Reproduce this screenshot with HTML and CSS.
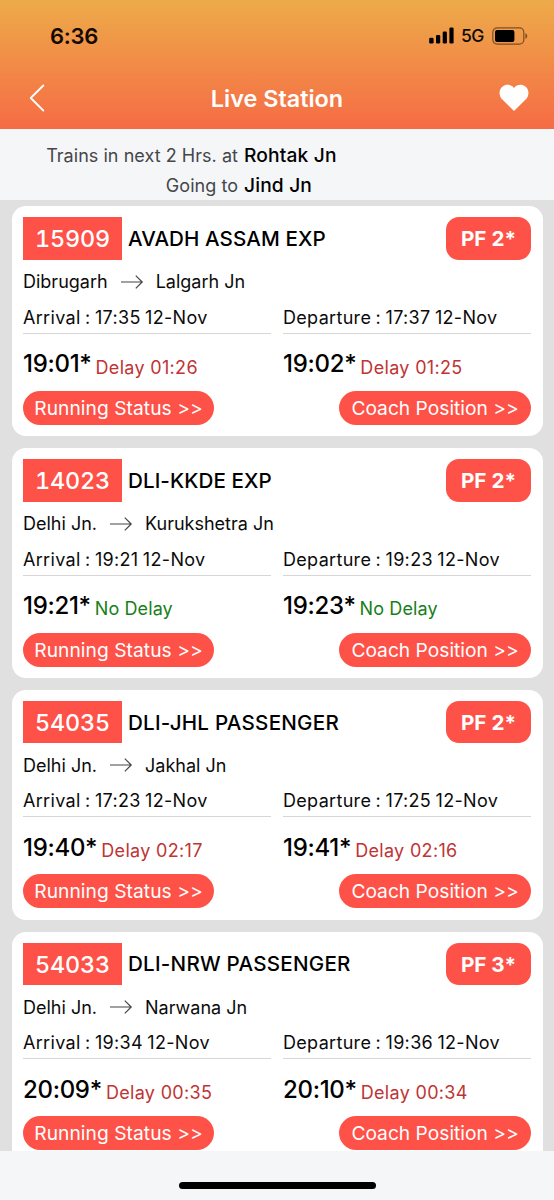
FILE: index.html
```html
<!DOCTYPE html>
<html lang="en">
<head>
<meta charset="utf-8">
<title>Live Station</title>
<link rel="stylesheet" href="styles.css">
</head>
<body>
<svg class="defs" aria-hidden="true"><symbol id="arrow" viewBox="0 0 24 16"><path d="M1 8H22.2M15.8 1.6L22.2 8L15.8 14.4"/></symbol></svg>
<div class="screen">
  <header class="top">
    <div class="status">
      <span class="clock">6:36</span>
      <div class="signals">
        <svg class="bars" viewBox="0 0 25 17"><rect x="0.2" y="10.8" width="4.4" height="5.7" rx="1.3"/><rect x="7" y="8" width="4.2" height="8.5" rx="1.3"/><rect x="13.7" y="4.4" width="4.2" height="12.1" rx="1.3"/><rect x="20.4" y="0.4" width="4.2" height="16.1" rx="1.3"/></svg>
        <span class="net">5G</span>
        <svg class="battery" viewBox="0 0 36 18"><rect class="shell" x="0.8" y="0.8" width="31" height="16.4" rx="4.4"/><rect x="3" y="3" width="19.4" height="12" rx="2"/><path class="tip" d="M33.4 6.2C35.8 6.9 35.8 11.1 33.4 11.8Z"/></svg>
      </div>
    </div>
    <nav class="nav">
      <svg class="back" viewBox="0 0 16 28"><path d="M14.3 1.5L1.7 14L14.3 26.5"/></svg>
      <h1 class="title">Live Station</h1>
      <svg class="heart" viewBox="0 0 30 28"><path d="M15 27L3.4 15.6C-.6 11.6-.2 5.4 3.6 2.5C7.2-.2 12.2.4 15 4C17.8.4 22.8-.2 26.4 2.5C30.2 5.4 30.6 11.6 26.6 15.6Z"/></svg>
    </nav>
  </header>
  <section class="summary">
    <div class="label">Trains in next 2 Hrs. at</div><div class="value">Rohtak Jn</div>
    <div class="label">Going to</div><div class="value">Jind Jn</div>
  </section>
  <main class="list">
    <article class="card">
      <div class="head"><span class="number">15909</span><span class="name">AVADH ASSAM EXP</span><span class="platform">PF 2*</span></div>
      <div class="route"><span>Dibrugarh</span><svg class="arrow"><use href="#arrow"/></svg><span>Lalgarh Jn</span></div>
      <div class="cols"><div class="sched">Arrival : 17:35 12-Nov</div><div class="sched">Departure : 17:37 12-Nov</div></div>
      <div class="cols actual"><div class="live"><b>19:01*</b><span class="late">Delay 01:26</span></div><div class="live"><b>19:02*</b><span class="late">Delay 01:25</span></div></div>
      <div class="actions"><span class="pill run">Running Status &gt;&gt;</span><span class="pill coach">Coach Position &gt;&gt;</span></div>
    </article>
    <article class="card">
      <div class="head"><span class="number">14023</span><span class="name">DLI-KKDE EXP</span><span class="platform">PF 2*</span></div>
      <div class="route"><span>Delhi Jn.</span><svg class="arrow"><use href="#arrow"/></svg><span>Kurukshetra Jn</span></div>
      <div class="cols"><div class="sched">Arrival : 19:21 12-Nov</div><div class="sched">Departure : 19:23 12-Nov</div></div>
      <div class="cols actual"><div class="live"><b>19:21*</b><span class="ontime">No Delay</span></div><div class="live"><b>19:23*</b><span class="ontime">No Delay</span></div></div>
      <div class="actions"><span class="pill run">Running Status &gt;&gt;</span><span class="pill coach">Coach Position &gt;&gt;</span></div>
    </article>
    <article class="card">
      <div class="head"><span class="number">54035</span><span class="name wide">DLI-JHL PASSENGER</span><span class="platform">PF 2*</span></div>
      <div class="route"><span>Delhi Jn.</span><svg class="arrow"><use href="#arrow"/></svg><span>Jakhal Jn</span></div>
      <div class="cols"><div class="sched">Arrival : 17:23 12-Nov</div><div class="sched">Departure : 17:25 12-Nov</div></div>
      <div class="cols actual"><div class="live"><b>19:40*</b><span class="late">Delay 02:17</span></div><div class="live"><b>19:41*</b><span class="late">Delay 02:16</span></div></div>
      <div class="actions"><span class="pill run">Running Status &gt;&gt;</span><span class="pill coach">Coach Position &gt;&gt;</span></div>
    </article>
    <article class="card">
      <div class="head"><span class="number">54033</span><span class="name wide">DLI-NRW PASSENGER</span><span class="platform">PF 3*</span></div>
      <div class="route"><span>Delhi Jn.</span><svg class="arrow"><use href="#arrow"/></svg><span>Narwana Jn</span></div>
      <div class="cols"><div class="sched">Arrival : 19:34 12-Nov</div><div class="sched">Departure : 19:36 12-Nov</div></div>
      <div class="cols actual"><div class="live"><b>20:09*</b><span class="late">Delay 00:35</span></div><div class="live"><b>20:10*</b><span class="late">Delay 00:34</span></div></div>
      <div class="actions"><span class="pill run">Running Status &gt;&gt;</span><span class="pill coach">Coach Position &gt;&gt;</span></div>
    </article>
  </main>
  <footer class="bottom"><div class="home"></div></footer>
</div>
</body>
</html>
```
FILE: styles.css
```css
* { box-sizing: border-box; }
body { margin: 0; font-family: Inter, "Liberation Sans", sans-serif; color: #0b0b0b; white-space: nowrap; }
svg { display: block; flex: none; }
.defs { width: 0; height: 0; position: absolute; }
.screen { width: 554px; height: 1200px; display: flex; flex-direction: column; overflow: hidden; background: #f5f6f8; }

.top { height: 129.4px; flex: none; background: linear-gradient(#edab49, #f66b45); }
.status { height: 67px; padding: 4px 26px 0 50px; display: flex; align-items: center; justify-content: space-between; }
.clock { font-size: 22px; font-weight: 600; letter-spacing: -.3px; color: #140a04; }
.signals { display: flex; align-items: center; }
.bars { width: 25px; height: 17px; }
.net { font-size: 17.5px; font-weight: 450; margin: 0 8px 0 7px; letter-spacing: -.4px; }
.battery { width: 36px; height: 18px; }
.shell { fill: none; stroke: #1a0d0488; stroke-width: 1.2; }
.tip { fill: #1a0d0488; }
.nav { height: 62px; padding: 0 25px 0 29px; display: flex; align-items: center; justify-content: space-between; }
.back { width: 16px; height: 28px; fill: none; stroke: #fff; stroke-width: 1.8; stroke-linecap: round; stroke-linejoin: round; }
.title { margin: 0 0 0 10px; font-size: 23.4px; font-weight: 600; color: #fff; }
.heart { width: 30px; height: 28px; fill: #fff; }

.summary { height: 70.6px; flex: none; padding-top: 12px; display: grid; grid-template-columns: 238px 1fr; grid-template-rows: 30px 30px; column-gap: 6px; line-height: 30px; font-size: 18px; }
.label { text-align: right; color: #45464a; letter-spacing: .04px; }
.value { font-weight: 500; font-size: 19.2px; letter-spacing: .15px; color: #000; line-height: 29.4px; }

.list { height: 951px; flex: none; overflow: hidden; background: #e0e0e0; padding: 6.3px 11.5px 0; display: flex; flex-direction: column; gap: 11.8px; }
.card { height: 230px; flex: none; background: #fff; border-radius: 14px; padding: 11px 11.5px; }
.head { height: 42.5px; display: flex; align-items: center; }
.number { width: 99px; height: 42.5px; line-height: 44.5px; background: #fe5148; color: #fff; font-size: 23.4px; font-weight: 500; font-variant-numeric: tabular-nums; letter-spacing: -.2px; text-align: center; }
.name { margin-left: 6px; font-size: 20.6px; letter-spacing: .08px; font-weight: 500; color: #000; }
.wide { letter-spacing: .24px; }
.platform { margin-left: auto; width: 85px; height: 42.5px; line-height: 43px; border-radius: 13px; background: #fe5148; color: #fff; font-size: 20.7px; font-weight: 700; text-align: center; }
.route { height: 43px; padding-top: 1px; display: flex; align-items: center; font-size: 18px; }
.arrow { width: 24px; height: 16px; margin: 0 12px 0 12px; fill: none; stroke: #444; stroke-width: 1.2; }
.cols { display: grid; grid-template-columns: 248px 248px; column-gap: 12px; }
.sched { height: 31px; line-height: 30px; border-bottom: 1px solid #d6d6d6; font-size: 18px; letter-spacing: .32px; word-spacing: -1px; }
.actual { height: 57px; align-items: center; }
.live { display: flex; align-items: baseline; gap: 4px; padding-top: 3px; }
.live b { font-size: 24px; font-weight: 500; letter-spacing: -.3px; color: #000; }
.live span { position: relative; top: 1.4px; font-size: 18px; }
.live .late { color: #bf3434; letter-spacing: .32px; }
.live .ontime { color: #178017; letter-spacing: .1px; }
.actions { display: flex; justify-content: space-between; }
.pill { width: 192px; height: 34px; border-radius: 17px; line-height: 35px; background: #fe5148; color: #fff; font-size: 19.2px; text-align: center; }
.run { width: 191px; letter-spacing: .06px; }

.bottom { flex: 1; padding-top: 31px; display: flex; justify-content: center; }
.home { width: 197px; height: 7px; border-radius: 4px; background: #000; }
```
